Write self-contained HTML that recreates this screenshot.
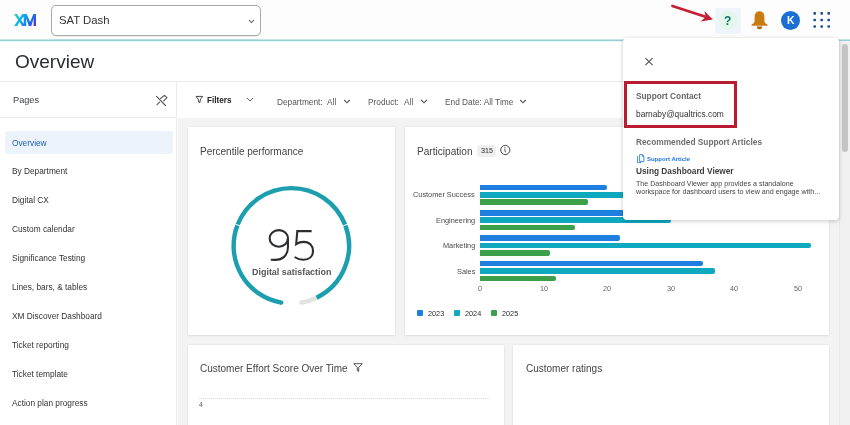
<!DOCTYPE html>
<html><head><meta charset="utf-8">
<style>
*{margin:0;padding:0;box-sizing:border-box}
html,body{width:850px;height:425px;overflow:hidden;background:#fff;font-family:"Liberation Sans",sans-serif;color:#333}
.a{position:absolute}
.t{position:absolute;white-space:nowrap;line-height:1;will-change:transform}
</style></head><body>
<!-- top bar -->
<div class="a" style="left:0;top:0;width:850px;height:39px;background:#fdfdfd"></div>
<div class="a" style="left:0;top:39px;width:850px;height:1px;background:#c4e6e7"></div>
<div class="a" style="left:0;top:40px;width:850px;height:1px;background:#96cfd1"></div>
<div class="a" style="left:0;top:41px;width:850px;height:1px;background:#eef7f7"></div>
<div class="a" style="left:54px;top:39px;width:204px;height:1px;background:#b9dbe3"></div>
<!-- XM logo -->
<svg class="a" style="left:14px;top:14px" width="22" height="12.2" viewBox="0 0 22 12.2">
<defs><linearGradient id="xg" gradientUnits="userSpaceOnUse" x1="0" y1="0" x2="22" y2="12.2"><stop offset="0" stop-color="#2ad9a0"/><stop offset=".35" stop-color="#10b0ee"/><stop offset=".7" stop-color="#1a70ea"/><stop offset="1" stop-color="#5a28de"/></linearGradient></defs>
<path fill="url(#xg)" d="M0 0 L3 0 L5.6 4.1 L8.2 0 L11.1 0 L7.1 6.1 L11.2 12.2 L8.2 12.2 L5.6 8.1 L3 12.2 L0 12.2 L4.1 6.1 Z M9.7 0 L12.7 0 L16.1 8 L19.4 0 L22 0 L22 12.2 L19.6 12.2 L19.6 4.6 L17.2 12.2 L14.9 12.2 L12.2 4.6 L12.2 12.2 L9.7 12.2 Z"/>
</svg>
<!-- select -->
<div class="a" style="left:51.2px;top:5px;width:209.6px;height:31.2px;border:1.2px solid #ababab;border-radius:5px;background:#fff;box-shadow:0 0.5px 0.5px rgba(0,0,0,.12)"></div>
<div class="t" style="left:59px;top:14.6px;font-size:11.3px;color:#333">SAT Dash</div>
<svg class="a" style="left:247.5px;top:19px" width="7" height="5" viewBox="0 0 7 5"><path d="M1 1 L3.5 3.5 L6 1" fill="none" stroke="#555" stroke-width="1.05"/></svg>

<!-- right icons -->
<div class="a" style="left:715px;top:8px;width:26px;height:26px;background:#eef5fb;border-radius:2px"></div>
<div class="a" style="left:719px;top:11px;width:19px;height:19px;background:#e2f6ec;border-radius:50%"></div>
<div class="t" style="left:724.4px;top:14.7px;font-size:12px;font-weight:bold;color:#137266">?</div>
<svg class="a" style="left:750px;top:10px" width="19" height="20" viewBox="0 0 19 20">
<path d="M9.5 1.2 C6.3 1.2 4.6 3.6 4.6 7 L4.6 11 C4.6 12.5 3.5 13.6 1.6 14.6 L1.4 15.8 L17.6 15.8 L17.4 14.6 C15.5 13.6 14.4 12.5 14.4 11 L14.4 7 C14.4 3.6 12.7 1.2 9.5 1.2 Z" fill="#c97b12"/>
<path d="M6.8 16.6 A2.7 2.6 0 0 0 12.2 16.6 Z" fill="#a9650e"/>
</svg>
<div class="a" style="left:781.2px;top:10.6px;width:19.2px;height:19.2px;background:#1a6fd3;border-radius:50%"></div>
<div class="t" style="left:787.4px;top:15.6px;font-size:10.4px;font-weight:bold;color:#fff">K</div>
<svg class="a" style="left:0;top:0" width="850" height="40" viewBox="0 0 850 40" fill="#1b4d9b"><rect x="813.4" y="12.1" width="2.6" height="2.6" rx="0.8"/><rect x="820.4" y="12.1" width="2.6" height="2.6" rx="0.8"/><rect x="827.4" y="12.1" width="2.6" height="2.6" rx="0.8"/><rect x="813.4" y="18.7" width="2.6" height="2.6" rx="0.8"/><rect x="820.4" y="18.7" width="2.6" height="2.6" rx="0.8"/><rect x="827.4" y="18.7" width="2.6" height="2.6" rx="0.8"/><rect x="813.4" y="25.2" width="2.6" height="2.6" rx="0.8"/><rect x="820.4" y="25.2" width="2.6" height="2.6" rx="0.8"/><rect x="827.4" y="25.2" width="2.6" height="2.6" rx="0.8"/></svg>
<!-- red arrow -->
<svg class="a" style="left:660px;top:0" width="60" height="30" viewBox="0 0 60 30">
<path d="M12.4 5.9 L47 17.2" stroke="#c41f35" stroke-width="2.6" stroke-linecap="round" fill="none"/>
<path d="M52.9 19.4 L44.4 11.1 L45.8 17 L40.5 21.5 Z" fill="#c41f35"/>
</svg>

<!-- page header -->
<div class="t" style="left:15px;top:52px;font-size:19px;color:#2a2c30">Overview</div>
<div class="a" style="left:0;top:81px;width:850px;height:1px;background:#ececec"></div>

<!-- sidebar -->
<div class="a" style="left:0;top:82px;width:177px;height:343px;background:#fff;border-right:1px solid #ebebeb"></div>
<div class="t" style="left:12.5px;top:95.8px;font-size:9.2px;color:#3f4246">Pages</div>
<div class="a" style="left:0;top:117px;width:177px;height:1px;background:#ececec"></div>
<div class="a" style="left:5px;top:130.5px;width:168px;height:23.7px;background:#edf3fb;border-radius:3px"></div>
<div class="t" style="left:12px;top:138.8px;font-size:8.3px;color:#1d5fb4">Overview</div>
<div class="t" style="left:12px;top:167.1px;font-size:8.3px;color:#333">By Department</div>
<div class="t" style="left:12px;top:196.1px;font-size:8.3px;color:#333">Digital CX</div>
<div class="t" style="left:12px;top:225.1px;font-size:8.3px;color:#333">Custom calendar</div>
<div class="t" style="left:12px;top:253.5px;font-size:8.3px;color:#333">Significance Testing</div>
<div class="t" style="left:12px;top:282.5px;font-size:8.3px;color:#333">Lines, bars, &amp; tables</div>
<div class="t" style="left:12px;top:311.6px;font-size:8.3px;color:#333">XM Discover Dashboard</div>
<div class="t" style="left:12px;top:340.6px;font-size:8.3px;color:#333">Ticket reporting</div>
<div class="t" style="left:12px;top:369.6px;font-size:8.3px;color:#333">Ticket template</div>
<div class="t" style="left:12px;top:398.7px;font-size:8.3px;color:#333">Action plan progress</div>

<!-- filter bar -->
<div class="a" style="left:178px;top:82px;width:672px;height:36px;background:#fff"></div>
<div class="a" style="left:178px;top:118px;width:672px;height:307px;background:#f3f3f3"></div>

<!-- cards -->
<div class="a" style="left:188px;top:127px;width:207px;height:208px;background:#fff;box-shadow:0 0 1px rgba(0,0,0,.18),0 1px 2px rgba(0,0,0,.06)"></div>
<div class="a" style="left:405px;top:127px;width:424px;height:208px;background:#fff;box-shadow:0 0 1px rgba(0,0,0,.18),0 1px 2px rgba(0,0,0,.06)"></div>
<div class="a" style="left:188px;top:344.7px;width:316px;height:90px;background:#fff;box-shadow:0 0 1px rgba(0,0,0,.18),0 1px 2px rgba(0,0,0,.06)"></div>
<div class="a" style="left:513px;top:344.7px;width:316px;height:90px;background:#fff;box-shadow:0 0 1px rgba(0,0,0,.18),0 1px 2px rgba(0,0,0,.06)"></div>


<!-- filter bar content -->
<svg class="a" style="left:195px;top:95px" width="9" height="9" viewBox="0 0 9 9"><path d="M1 1.4 L7.7 1.4 L5.5 4.1 L4.9 7.4 L3.8 7.4 L3.2 4.1 Z" fill="none" stroke="#333" stroke-width="0.9" stroke-linejoin="round"/></svg>
<div class="t" style="left:207px;top:96.6px;font-size:8.2px;font-weight:bold;color:#222">Filters</div>
<svg class="a" style="left:246px;top:97px" width="8" height="5" viewBox="0 0 8 5"><path d="M1 1 L4 4 L7 1" fill="none" stroke="#555" stroke-width="0.9"/></svg>
<div class="t" style="left:276.6px;top:97.8px;font-size:8.3px;color:#555">Department:</div><div class="t" style="left:326.9px;top:97.8px;font-size:8.3px;color:#555">All</div>
<svg class="a" style="left:343px;top:99px" width="8" height="5" viewBox="0 0 8 5"><path d="M1.2 1 L4 3.8 L6.8 1" fill="none" stroke="#555" stroke-width="1.15"/></svg>
<div class="t" style="left:368px;top:97.8px;font-size:8.3px;color:#555">Product:</div><div class="t" style="left:404px;top:97.8px;font-size:8.3px;color:#555">All</div>
<svg class="a" style="left:420px;top:99px" width="8" height="5" viewBox="0 0 8 5"><path d="M1.2 1 L4 3.8 L6.8 1" fill="none" stroke="#555" stroke-width="1.15"/></svg>
<div class="t" style="left:445px;top:97.8px;font-size:8.3px;color:#555">End Date: All Time</div>
<svg class="a" style="left:519px;top:99px" width="8" height="5" viewBox="0 0 8 5"><path d="M1.2 1 L4 3.8 L6.8 1" fill="none" stroke="#555" stroke-width="1.15"/></svg>
<!-- pin icon -->
<svg class="a" style="left:150px;top:88px" width="24" height="24" viewBox="0 0 24 24"><path d="M6.5 8.4 L15.5 17.5 M7 16.7 L9.6 14.2 M10.6 10.5 L14.4 7.3 L17 9.6 L13.7 12.8" fill="none" stroke="#555" stroke-width="1.1" stroke-linecap="round" stroke-linejoin="round"/></svg>

<!-- card1 content -->
<div class="t" style="left:200px;top:147px;font-size:10px;color:#444">Percentile performance</div>
<svg class="a" style="left:231px;top:185px" width="122" height="122" viewBox="0 0 122 122">
<path d="M85.64 112.66 A57.7 57.7 0 0 1 70.47 117.61" fill="none" stroke="#e3e3e3" stroke-width="4.4"/>
<circle cx="70.47" cy="117.61" r="2.2" fill="#e3e3e3"/>
<path d="M50.23 117.61 A57.7 57.7 0 0 1 6.37 40.40" fill="none" stroke="#1b9fae" stroke-width="4.4"/>
<circle cx="50.23" cy="117.61" r="2.2" fill="#1b9fae"/>
<path d="M6.74 39.47 A57.7 57.7 0 0 1 114.04 39.65" fill="none" stroke="#1b9fae" stroke-width="4.4"/>
<path d="M114.40 40.59 A57.7 57.7 0 0 1 85.64 112.66" fill="none" stroke="#1b9fae" stroke-width="4.4"/>
</svg>
<svg class="a" style="left:264px;top:225px" width="56" height="40" viewBox="264 225 56 40"><g fill="none" stroke="#2b2d31" stroke-width="2.1" stroke-linecap="butt">
<ellipse cx="278.8" cy="238.4" rx="9.15" ry="8.3"/>
<path d="M287.95 238.4 L287.95 247 C287.95 255.5 282.5 259.9 275 259.9 L270.8 259.7"/>
<path d="M311.6 231.1 L297.3 231.1 L296.2 244.2 C298.5 242.6 301 241.9 303.8 241.9 C309.6 241.9 313 245.8 313 250.8 C313 256.3 309.3 259.8 303.5 259.8 C300.2 259.8 297.2 258.8 294.6 257"/>
</g></svg>
<div class="t" style="left:251.6px;top:267.6px;font-size:8.95px;font-weight:bold;color:#555">Digital satisfaction</div>


<!-- card2 content -->
<div class="t" style="left:417px;top:147px;font-size:10.1px;color:#444">Participation</div>
<div class="a" style="left:477px;top:145px;width:19px;height:12px;background:#efefef;border-radius:2px"></div>
<div class="t" style="left:481px;top:148px;font-size:7.1px;color:#444;-webkit-text-stroke:0.1px #444">315</div>
<svg class="a" style="left:499px;top:144px" width="13" height="13" viewBox="499 144 13 13"><circle cx="505.3" cy="150" r="4.6" fill="none" stroke="#444" stroke-width="1"/><path d="M504.9 147.5 L504.9 147.9 M504.9 149.2 L505 151.3 Q505.1 152 505.8 152" fill="none" stroke="#444" stroke-width="0.9" stroke-linecap="round"/></svg>

<!-- bars -->
<div class="a" style="left:480px;top:184.70px;width:127.2px;height:5.7px;background:#1f7fe0;border-radius:0 2px 2px 0"></div>
<div class="a" style="left:480px;top:192.05px;width:190.8px;height:5.7px;background:#0ea8bf;border-radius:0 2px 2px 0"></div>
<div class="a" style="left:480px;top:199.40px;width:108.1px;height:5.7px;background:#3c9f4a;border-radius:0 2px 2px 0"></div>
<div class="t" style="right:375px;top:191.4px;font-size:7.35px;color:#4a4a4a">Customer Success</div>
<div class="a" style="left:480px;top:209.90px;width:190.8px;height:5.7px;background:#1f7fe0;border-radius:0 2px 2px 0"></div>
<div class="a" style="left:480px;top:217.25px;width:190.8px;height:5.7px;background:#0ea8bf;border-radius:0 2px 2px 0"></div>
<div class="a" style="left:480px;top:224.60px;width:95.4px;height:5.7px;background:#3c9f4a;border-radius:0 2px 2px 0"></div>
<div class="t" style="right:375px;top:216.6px;font-size:7.35px;color:#4a4a4a">Engineering</div>
<div class="a" style="left:480px;top:235.30px;width:139.9px;height:5.7px;background:#1f7fe0;border-radius:0 2px 2px 0"></div>
<div class="a" style="left:480px;top:242.65px;width:330.7px;height:5.7px;background:#0ea8bf;border-radius:0 2px 2px 0"></div>
<div class="a" style="left:480px;top:250.00px;width:70.0px;height:5.7px;background:#3c9f4a;border-radius:0 2px 2px 0"></div>
<div class="t" style="right:375px;top:242.0px;font-size:7.35px;color:#4a4a4a">Marketing</div>
<div class="a" style="left:480px;top:260.80px;width:222.6px;height:5.7px;background:#1f7fe0;border-radius:0 2px 2px 0"></div>
<div class="a" style="left:480px;top:268.15px;width:235.3px;height:5.7px;background:#0ea8bf;border-radius:0 2px 2px 0"></div>
<div class="a" style="left:480px;top:275.50px;width:76.3px;height:5.7px;background:#3c9f4a;border-radius:0 2px 2px 0"></div>
<div class="t" style="right:375px;top:267.6px;font-size:7.35px;color:#4a4a4a">Sales</div>
<div class="t" style="left:460.0px;width:40px;text-align:center;top:285px;font-size:7.3px;color:#666">0</div>
<div class="t" style="left:523.6px;width:40px;text-align:center;top:285px;font-size:7.3px;color:#666">10</div>
<div class="t" style="left:587.2px;width:40px;text-align:center;top:285px;font-size:7.3px;color:#666">20</div>
<div class="t" style="left:650.8px;width:40px;text-align:center;top:285px;font-size:7.3px;color:#666">30</div>
<div class="t" style="left:714.4px;width:40px;text-align:center;top:285px;font-size:7.3px;color:#666">40</div>
<div class="t" style="left:778.0px;width:40px;text-align:center;top:285px;font-size:7.3px;color:#666">50</div>
<div class="a" style="left:417px;top:310px;width:6px;height:6px;background:#1f7fe0;border-radius:1px"></div>
<div class="t" style="left:428px;top:309.5px;font-size:7.3px;color:#2a2a2a">2023</div>
<div class="a" style="left:454px;top:310px;width:6px;height:6px;background:#0ea8bf;border-radius:1px"></div>
<div class="t" style="left:465px;top:309.5px;font-size:7.3px;color:#2a2a2a">2024</div>
<div class="a" style="left:491px;top:310px;width:6px;height:6px;background:#3c9f4a;border-radius:1px"></div>
<div class="t" style="left:502px;top:309.5px;font-size:7.3px;color:#2a2a2a">2025</div>


<div class="t" style="left:200px;top:364px;font-size:10px;color:#444">Customer Effort Score Over Time</div>
<svg class="a" style="left:353px;top:363px" width="10" height="9" viewBox="0 0 10 9"><path d="M0.7 0.7 L9.3 0.7 L5.7 4.4 L5.7 8.4 L4.3 7.6 L4.3 4.4 Z" fill="none" stroke="#444" stroke-width="0.9" stroke-linejoin="round"/></svg>
<div class="a" style="left:199px;top:397.5px;width:291px;height:0;border-top:1px dotted #dcdcdc"></div>
<div class="t" style="left:199px;top:402px;font-size:6.5px;color:#555">4</div>
<div class="t" style="left:526px;top:364px;font-size:10px;color:#444">Customer ratings</div>

<!-- page scrollbar track -->
<div class="a" style="left:839px;top:41px;width:11px;height:384px;background:#f1f1f1;border-left:1px solid #e9e9e9"></div>
<div class="a" style="left:842px;top:44px;width:6px;height:108px;background:#c4c4c4;border-radius:3px"></div>

<!-- popup -->
<div class="a" style="left:623px;top:38px;width:216px;height:182px;background:#fff;border-radius:4px;box-shadow:0 1px 4px rgba(0,0,0,.22)"></div>

<svg class="a" style="left:644px;top:57px" width="10" height="10" viewBox="0 0 10 10"><path d="M1.4 1.1 L8.6 8.1 M8.6 1.1 L1.4 8.1" stroke="#505050" stroke-width="1.1"/></svg>
<div class="a" style="left:624px;top:81px;width:113px;height:47px;border:3px solid #b81c2e"></div>
<div class="t" style="left:636px;top:92px;font-size:8.3px;font-weight:bold;color:#666">Support Contact</div>
<div class="t" style="left:636px;top:110px;font-size:8.35px;color:#333">barnaby@qualtrics.com</div>
<div class="t" style="left:636px;top:138px;font-size:8.3px;font-weight:bold;color:#6e6e6e">Recommended Support Articles</div>
<svg class="a" style="left:636px;top:153px" width="10" height="11" viewBox="0 0 10 11"><path d="M3.6 1.7 L6.6 1.7 L7.9 3 L7.9 8.4 L3.6 8.4 Z M6.4 1.7 L6.4 3.2 L7.9 3.2 M1.6 3.2 L1.6 9.6 L5.4 9.6" fill="none" stroke="#2a7fdc" stroke-width="0.9" stroke-linejoin="round"/></svg>
<div class="t" style="left:647px;top:155.6px;font-size:6px;font-weight:bold;color:#1c74d8">Support Article</div>
<div class="t" style="left:636px;top:166.9px;font-size:8.3px;font-weight:bold;color:#3d3d3d">Using Dashboard Viewer</div>
<div class="t" style="left:636px;top:180.6px;font-size:7.1px;color:#444">The Dashboard Viewer app provides a standalone</div>
<div class="t" style="left:636px;top:189px;font-size:7.15px;color:#444">workspace for dashboard users to view and engage with...</div>
</body></html>
